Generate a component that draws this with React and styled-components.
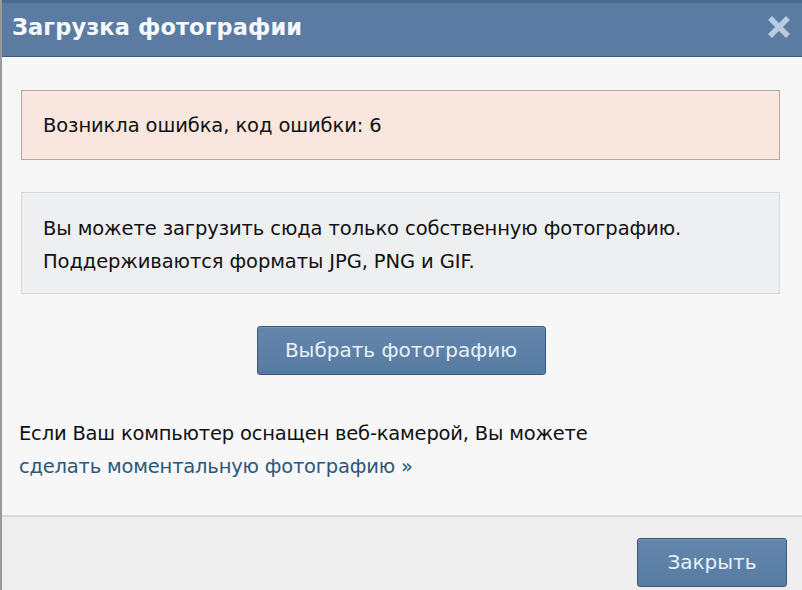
import React from "react";
import styled, { createGlobalStyle } from "styled-components";

const Global = createGlobalStyle`
  html, body { margin: 0; padding: 0; background: #f7f7f7; }
  body { font-family: "DejaVu Sans", "Noto Sans", sans-serif; }
`;

const Dialog = styled.div`
  width: 802px;
  height: 590px;
  display: flex;
  flex-direction: column;
  box-sizing: border-box;
  border-left: 2px solid #9a9a9a;
  background: #f7f7f7;
  overflow: hidden;
`;

const Header = styled.div`
  height: 57px;
  box-sizing: border-box;
  background: #5b7ba2;
  border-top: 3px solid #4d6b8f;
  border-bottom: 1px solid #3e5877;
  display: flex;
  align-items: center;
  justify-content: space-between;
  padding: 0 10px 5px 10px;
`;

const Title = styled.div`
  color: #f4f8fb;
  font-weight: bold;
  font-size: 22.5px;
  letter-spacing: 0.1px;
`;

const Close = styled.div`
  width: 26px;
  height: 26px;
  display: flex;
  align-items: center;
  justify-content: center;
`;

const Body = styled.div`
  flex: 1;
  display: flex;
  flex-direction: column;
  padding: 33px 21px 0 17px;
  box-sizing: border-box;
`;

const Box = styled.div`
  margin-left: 2px;
  box-sizing: border-box;
  width: 759px;
  border: 1px solid ${(p) => (p.$error ? "#b3a7a1" : "#d5d7d9")};
  background: ${(p) => (p.$error ? "#f8e6df" : "#edeff1")};
  padding: ${(p) => (p.$error ? "18px 21px 17px" : "19px 21px 15px")};
  color: #111;
  font-size: 19.5px;
  line-height: 33px;
  margin-bottom: ${(p) => p.$mb || 0}px;
  letter-spacing: -0.1px;
`;

const Center = styled.div`
  display: flex;
  justify-content: center;
  padding-left: 2px;
`;

const Button = styled.div`
  box-sizing: border-box;
  width: ${(p) => p.$w}px;
  height: 49px;
  border: 1px solid #3b5677;
  border-radius: 3px;
  background: linear-gradient(#6486ad, #587ba2);
  color: #e6f1f9;
  font-size: 20px;
  display: flex;
  align-items: center;
  justify-content: center;
  padding-bottom: 1px;
  box-shadow: inset 0 1px 0 #7395bb;
`;

const Note = styled.div`
  margin-top: 42px;
  color: #111;
  font-size: 19.5px;
  line-height: 33px;
  letter-spacing: -0.2px;
`;

const Link = styled.a`
  color: #2b587a;
  text-decoration: none;
`;

const Footer = styled.div`
  height: 75px;
  box-sizing: border-box;
  border-top: 2px solid #d8d8d8;
  background: #eeeeee;
  display: flex;
  justify-content: flex-end;
  align-items: flex-start;
  padding: 21px 15px 0 0;
`;

export default function App() {
  return (
    <>
      <Global />
      <Dialog>
        <Header>
          <Title>Загрузка фотографии</Title>
          <Close>
            <svg width="24" height="24" viewBox="0 0 24 24">
              <path d="M3 3 L21 21 M21 3 L3 21" stroke="#b7cce0" strokeWidth="5.5" strokeLinecap="butt" />
            </svg>
          </Close>
        </Header>
        <Body>
          <Box $error $mb={32}>Возникла ошибка, код ошибки: 6</Box>
          <Box $mb={32}>
            Вы можете загрузить сюда только собственную фотографию.
            <br />
            Поддерживаются форматы JPG, PNG и GIF.
          </Box>
          <Center>
            <Button $w={289}>Выбрать фотографию</Button>
          </Center>
          <Note>
            Если Ваш компьютер оснащен веб-камерой, Вы можете
            <br />
            <Link href="#">сделать моментальную фотографию »</Link>
          </Note>
        </Body>
        <Footer>
          <Button $w={150}>Закрыть</Button>
        </Footer>
      </Dialog>
    </>
  );
}
